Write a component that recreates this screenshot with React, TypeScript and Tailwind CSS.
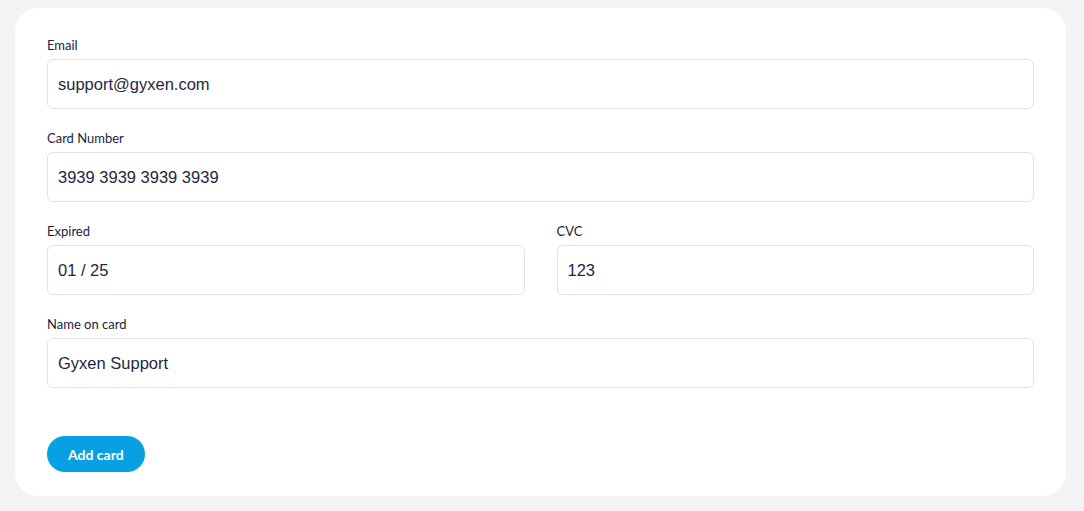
import { useState } from "react"

type FieldProps = {
  label: string
  value: string
  onChange: (v: string) => void
}

function Field({ label, value, onChange }: FieldProps) {
  return (
    <div className="flex flex-col">
      <label className="mb-1 h-5 text-[13px] leading-5 font-normal text-[#1a2240] font-['Lato',sans-serif]">
        {label}
      </label>
      <input
        value={value}
        onChange={(e) => onChange(e.target.value)}
        className="h-[50px] w-full rounded-[6px] border border-[#e2e2e2] bg-white px-[10px] text-[16.5px] text-[#1f2743] font-['Liberation_Sans',Arial,sans-serif] outline-none"
      />
    </div>
  )
}

export default function App() {
  const [email, setEmail] = useState("support@gyxen.com")
  const [number, setNumber] = useState("3939 3939 3939 3939")
  const [expiry, setExpiry] = useState("01 / 25")
  const [cvc, setCvc] = useState("123")
  const [name, setName] = useState("Gyxen Support")

  return (
    <div className="min-h-screen bg-[#f3f3f5] pl-[15px] pr-[18px] pt-2 pb-4">
      <div className="rounded-[24px] bg-white px-8 pt-[27px] pb-6">
        <form onSubmit={(e) => e.preventDefault()} className="flex flex-col gap-[19px]">
          <Field label="Email" value={email} onChange={setEmail} />
          <Field label="Card Number" value={number} onChange={setNumber} />
          <div className="grid grid-cols-2 gap-8">
            <Field label="Expired" value={expiry} onChange={setExpiry} />
            <Field label="CVC" value={cvc} onChange={setCvc} />
          </div>
          <Field label="Name on card" value={name} onChange={setName} />
          <div className="pt-[29px]">
            <button
              type="submit"
              className="h-[36px] rounded-full bg-[#07a0e2] px-[21px] text-[14px] font-bold text-white font-['Lato',sans-serif]"
            >
              Add card
            </button>
          </div>
        </form>
      </div>
    </div>
  )
}
